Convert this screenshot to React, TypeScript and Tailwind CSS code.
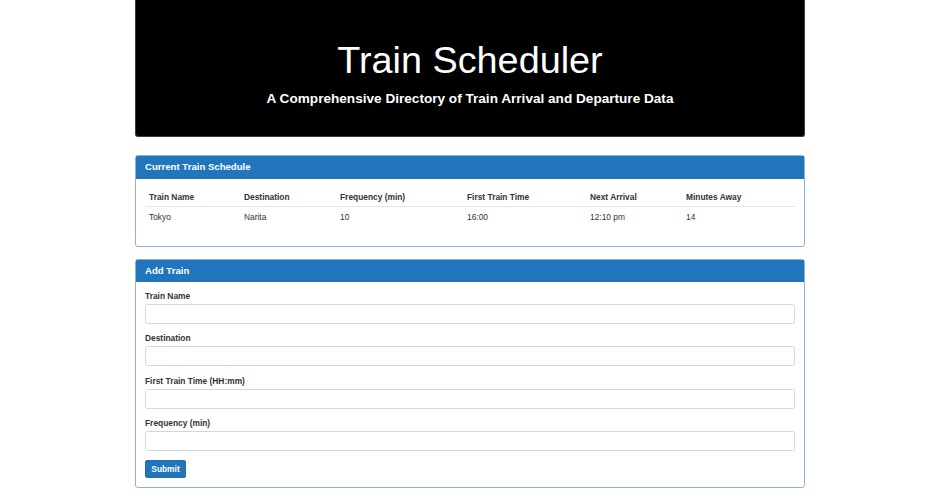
import React from "react";

const cols = ["Train Name", "Destination", "Frequency (min)", "First Train Time", "Next Arrival", "Minutes Away"];
const row = ["Tokyo", "Narita", "10", "16:00", "12:10 pm", "14"];
const fields = ["Train Name", "Destination", "First Train Time (HH:mm)", "Frequency (min)"];

export default function App() {
  return (
    <div className="min-h-[500px] w-[940px] bg-white text-[#333] font-['Liberation_Sans',Arial,sans-serif]">
      <div className="mx-auto w-[670px]">
        <div className="h-[137px] rounded-b-[3px] border border-t-0 border-[#3a3a3a] bg-black flex flex-col items-center text-white">
          <h1 className="mt-[38px] text-[37.8px] leading-[44px] font-normal">Train Scheduler</h1>
          <h3 className="mt-[8px] text-[13.6px] leading-[18px] font-bold">A Comprehensive Directory of Train Arrival and Departure Data</h3>
        </div>

        <div className="mt-[18px] rounded-[3px] border border-[#8eb0dc]">
          <div className="h-[23px] bg-[#2175bc] px-[9px] flex items-center text-white text-[9.6px] font-bold">Current Train Schedule</div>
          <div className="px-[9px] pt-[8px] pb-[19px]">
            <div className="grid grid-cols-[95px_96px_127px_123px_96px_1fr] text-[8.4px]">
              {cols.map((c) => (
                <div key={c} className="h-[20px] pl-[4px] pt-[2px] font-bold border-b-[1.5px] border-[#e4e4e4] flex items-center">{c}</div>
              ))}
              {row.map((c, i) => (
                <div key={i} className="h-[20px] pl-[4px] flex items-center">{c}</div>
              ))}
            </div>
          </div>
        </div>

        <div className="mt-[12px] rounded-[3px] border border-[#8eb0dc]">
          <div className="h-[22px] bg-[#2175bc] px-[9px] flex items-center text-white text-[9.6px] font-bold">Add Train</div>
          <div className="px-[9px] pt-[9px] pb-[9px] flex flex-col">
            {fields.map((f, i) => (
              <div key={f} className={i === 1 ? "mb-[10px]" : "mb-[9px]"}>
                <div className="h-[10px] leading-[10px] text-[8.4px] font-bold mb-[3px]">{f}</div>
                <input className="block w-full h-[20px] rounded-[2.5px] border border-[#d6d6d6] bg-white" />
              </div>
            ))}
            <button className="w-[41px] h-[18px] rounded-[2px] border border-[#2e6da4] bg-[#2175bc] text-white text-[8.4px] font-bold">Submit</button>
          </div>
        </div>
      </div>
    </div>
  );
}
